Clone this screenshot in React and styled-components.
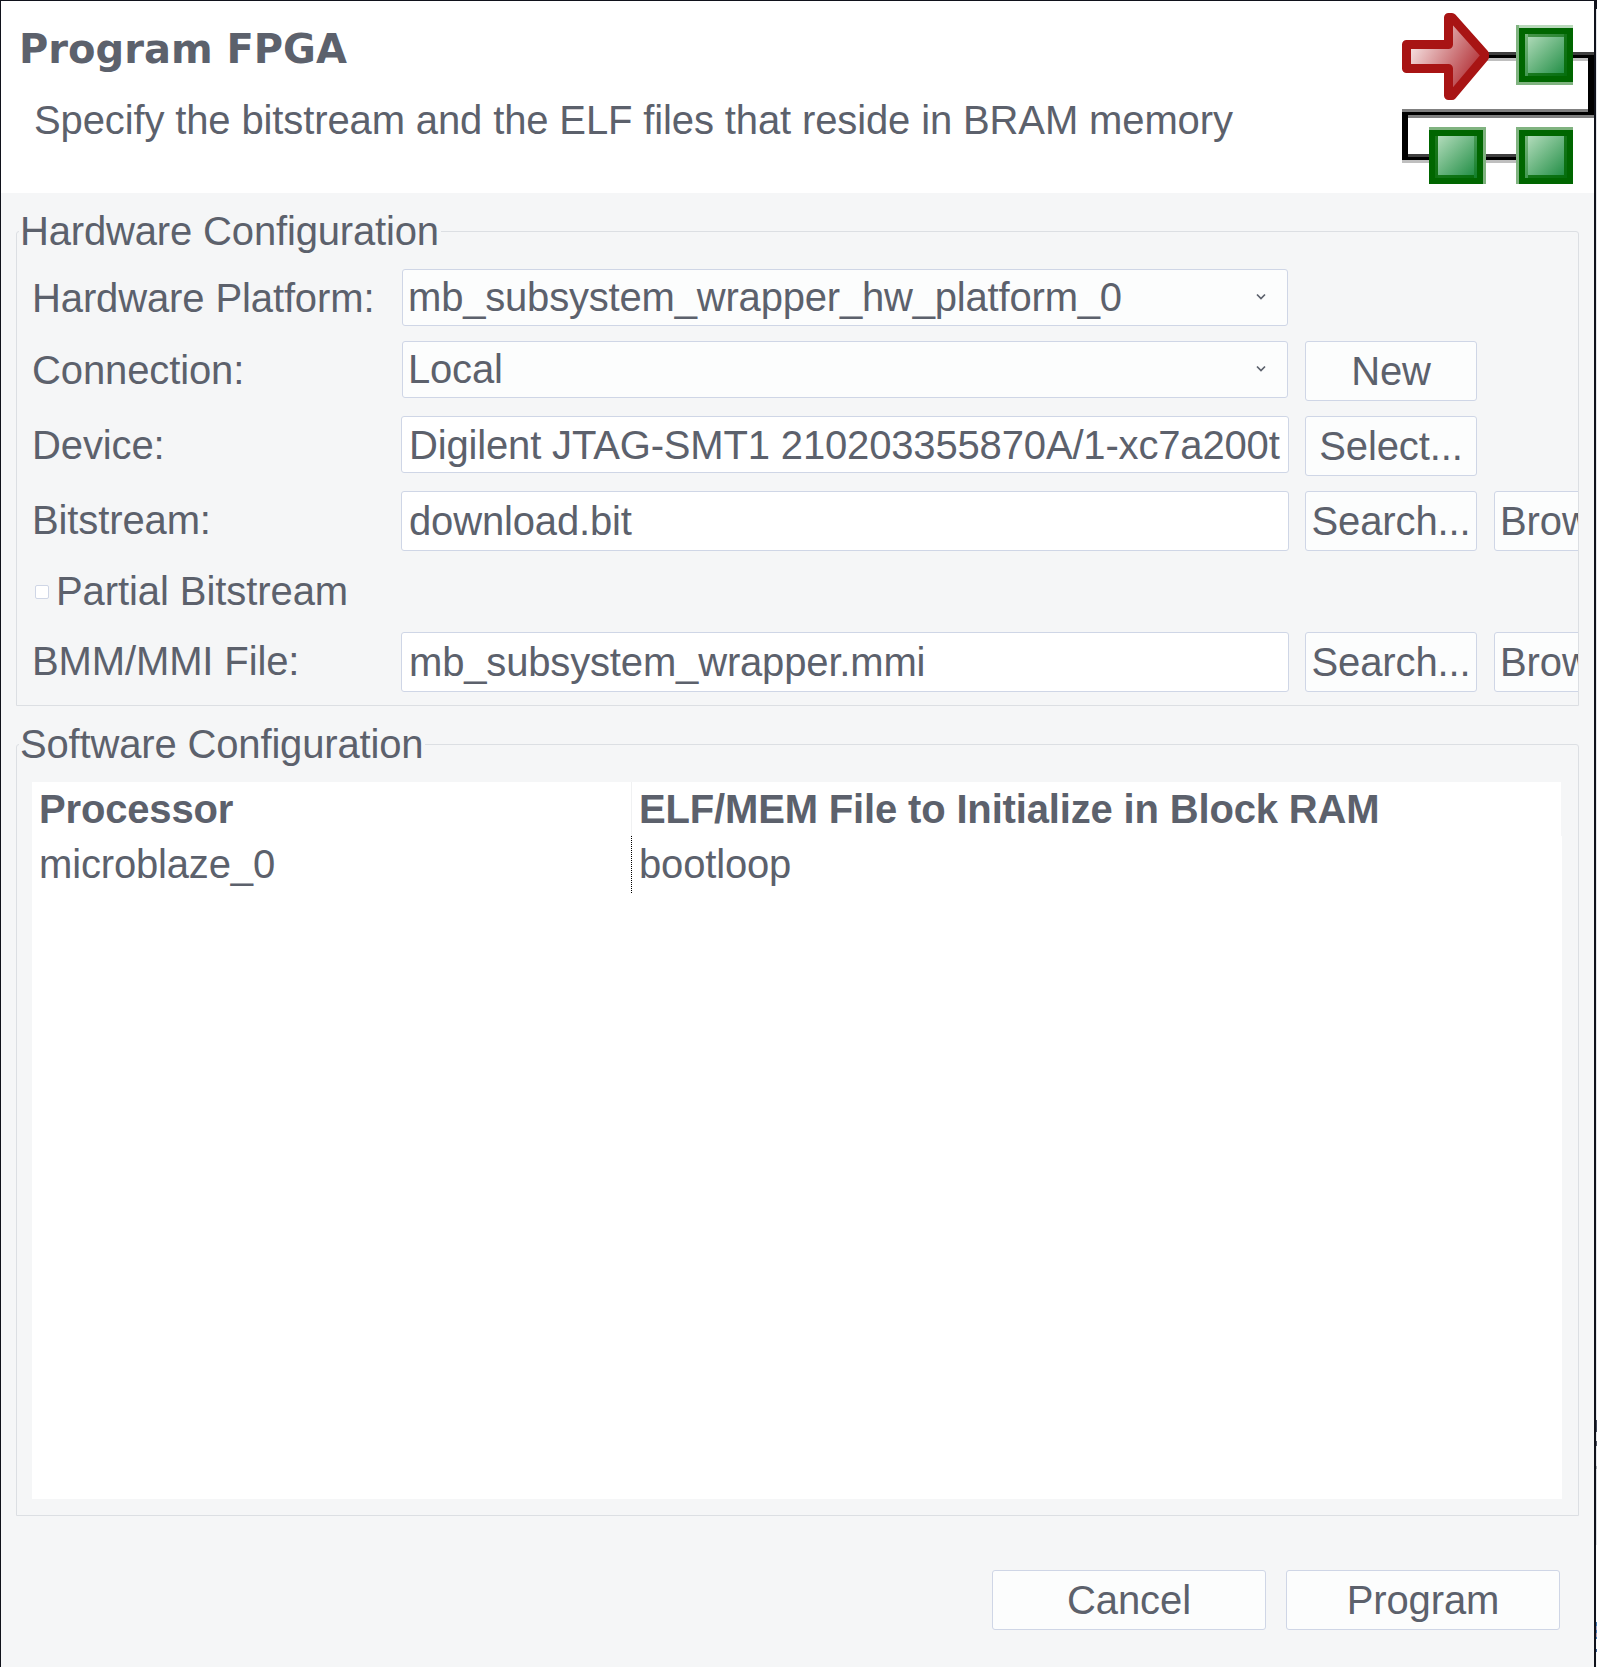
import React from "react";
import styled, { createGlobalStyle } from "styled-components";

const Global = createGlobalStyle`
  * { box-sizing: border-box; }
  html, body { margin: 0; padding: 0; overflow: hidden; background: #12131c; }
`;

const Screen = styled.div`
  display: flex;
  width: 1597px;
  height: 1667px;
  padding: 1px 0 0 1px;
  overflow: hidden;
  background: #10121b;
  font-family: "Liberation Sans", Arial, sans-serif;
  font-size: 40px;
  line-height: 46px;
  letter-spacing: -0.16px;
  color: #5c616c;
  white-space: nowrap;
`;

const Dialog = styled.main`
  display: flex;
  flex-direction: column;
  flex: none;
  width: 1593px;
  height: 1666px;
  background: #f5f6f7;
`;

const Backdrop = styled.div`
  flex: none;
  width: 1px;
  margin: 8px 0 0 2px;
  background: linear-gradient(
    #e4e6ea 0 1411px, #454b5c 1411px 1423px, #e4e6ea 1423px 1432px,
    #4c5262 1432px 1437px, #e4e6ea 1437px 1457px, #a5a7ad 1457px 1460px,
    #dcdfe3 1460px 1536px, #f8f9fa 1536px 1613px, #3f78b4 1613px 1617px,
    #a9a4c4 1617px 1621px, #3f78b4 1621px 1624px, #b59fb4 1624px 1628px,
    #3f78b4 1628px 1630px, #f8f9fa 1630px 1640px, #3b5f92 1640px 1643px,
    #f8f9fa 1643px
  );
`;

const Banner = styled.header`
  display: flex;
  justify-content: space-between;
  height: 192px;
  background: #ffffff;
`;

const BannerText = styled.div`
  padding: 24px 0 0 18px;
`;

const Title = styled.h1`
  margin: 0;
  font: bold 40px/48px "DejaVu Sans", sans-serif;
  letter-spacing: 0;
`;

const Subtitle = styled.p`
  margin: 24px 0 0 15px;
  letter-spacing: -0.127px;
`;

const Chain = styled.svg`
  display: block;
  flex: none;
  width: 192px;
  height: 192px;
`;

const Group = styled.fieldset`
  min-width: 0;
  height: ${(p) => p.$height}px;
  margin: 15px 15px 0 15px;
  padding: 0 0 0 15px;
  border: 1px solid #dcdfe3;
  border-radius: 3px 3px 0 0;
`;

const Legend = styled.legend`
  margin-left: -13px;
  padding: 0 2px 0 1px;
  height: 46px;
`;

const Form = styled.div`
  display: grid;
  grid-template-columns: 369px 904px 189px 172px;
  grid-template-rows: 57px 60px 60px 60px 51px 60px;
  row-gap: 15px;
  width: 1546px;
  margin-top: 15px;
  overflow: hidden;
`;

const Label = styled.label`
  grid-column: 1;
  padding-top: 6px;
  letter-spacing: -0.12px;
`;

const Field = styled.div`
  grid-column: 2;
  width: 888px;
  height: ${(p) => p.$height || 60}px;
  padding: ${(p) => (p.$height ? 5 : 6)}px 7px;
  border: 1px solid #cfd6e6;
  border-radius: 3px;
  background: #ffffff;
`;

const Select = styled.div`
  grid-column: 2;
  display: flex;
  justify-content: space-between;
  width: 886px;
  height: 57px;
  margin-left: 1px;
  padding: 4px 21.5px 0 5px;
  border: 1px solid #cfd6e6;
  border-radius: 3px;
  background: #fcfdfd;
  letter-spacing: -0.19px;
`;

const Chevron = styled.svg`
  width: 10px;
  height: 8px;
  margin-top: 19px;
`;

const Button = styled.button`
  width: ${(p) => p.$width || 172}px;
  height: 60px;
  padding: 0 5px;
  border: 1px solid #cfd6e6;
  border-radius: 3px;
  background: #fcfdfd;
  font: inherit;
  letter-spacing: -0.1px;
  color: inherit;
  text-align: center;
`;

const CheckRow = styled.div`
  grid-column: 1 / 3;
  display: flex;
  padding-top: 2px;
  letter-spacing: -0.08px;
`;

const Checkbox = styled.span`
  width: 14px;
  height: 14px;
  margin: 17px 7px 0 3px;
  border: 1px solid #cfd6e6;
  border-radius: 2px;
  background: #ffffff;
`;

const Table = styled.div`
  width: 1530px;
  height: 717px;
  margin-top: 15px;
  background: #ffffff;
`;

const TableRow = styled.div`
  display: grid;
  grid-template-columns: 600px 1fr;
  height: ${(p) => p.$height}px;
  font-weight: ${(p) => (p.$head ? "bold" : "normal")};
  border-right: ${(p) => (p.$head ? "1px solid #f5f6f7" : "none")};
`;

const Cell = styled.div`
  padding: ${(p) => p.$pad}px 7px 0;
`;

const HeadCell = styled(Cell)`
  &:first-child { border-right: 1px solid #f0f1f2; }
`;

const FocusCell = styled(Cell)`
  background: repeating-linear-gradient(#000 0 1px, #fff 1px 2px) right top / 1px 100% no-repeat;
`;

const Actions = styled.footer`
  display: flex;
  justify-content: flex-end;
  gap: 20px;
  padding: 54px 34px 0 0;
`;

const nodes = [
  { x: 117, y: 27, halo: [114, 24, 57, 60], top: "#b9d9bb", shade: [0.35, 0.6, 0.8, 0.75] },
  { x: 27, y: 129, halo: [27, 126, 57, 57], top: "#80b380", shade: [0.85, 0, 0.35, 0.8] },
  { x: 117, y: 129, halo: [114, 126, 57, 57], top: "#80b380", shade: [0.35, 0, 0.8, 0.8] },
];

function FpgaChain() {
  return (
    <Chain viewBox="0 0 192 192">
      <defs>
        <linearGradient id="green" x1="0" y1="0" x2="1" y2="1">
          <stop offset="0" stopColor="#b8dfc0" />
          <stop offset="1" stopColor="#1a8a3f" />
        </linearGradient>
        <linearGradient id="red" gradientUnits="userSpaceOnUse" x1="6" y1="44" x2="76" y2="84">
          <stop offset="0" stopColor="#f8e8e8" />
          <stop offset="1" stopColor="#ac2026" />
        </linearGradient>
      </defs>
      <g shapeRendering="crispEdges">
        <path fill="#404040" d="M84 51h108v3H84zM6 153h114v3H6z" />
        <path fill="#bfbfbf" d="M84 57h105v3H84zM0 159h120v3H0z" />
        <path fill="#000" d="M84 54h108v3H84zM6 156h114v3H6z" />
        <path fill="#808080" d="M0 108h192v9H0z" />
        <path fill="#000" d="M0 111h192v3H0zM186 54h6v60h-6zM0 111h6v48H0z" />
      </g>
      <path
        d="M4.500 43.500H46.500V16.500H50L82.500 53V56L50 94.500H46.500V67.500H4.500Z"
        fill="url(#red)"
        stroke="#a81414"
        strokeWidth="9"
        strokeLinejoin="round"
      />
      {nodes.map((n, i) => (
        <g key={i} shapeRendering="crispEdges">
          <rect x={n.halo[0]} y={n.halo[1]} width={n.halo[2]} height={n.halo[3]} fill="#80b380" />
          <rect x={n.x} y={n.y - 3} width="54" height="3" fill={n.top} />
          <rect x={n.x} y={n.y} width="54" height="54" fill="#006600" />
          <rect x={n.x + 6} y={n.y + 6} width="42" height="42" fill="url(#green)" />
          <g fill="#006600">
            <rect x={n.x + 6} y={n.y + 6} width="3" height="42" opacity={n.shade[0]} />
            <rect x={n.x + 9} y={n.y + 6} width="36" height="3" opacity={n.shade[1]} />
            <rect x={n.x + 45} y={n.y + 6} width="3" height="42" opacity={n.shade[2]} />
            <rect x={n.x + 9} y={n.y + 45} width="36" height="3" opacity={n.shade[3]} />
          </g>
        </g>
      ))}
    </Chain>
  );
}

function Arrow() {
  return (
    <Chevron viewBox="0 0 10 8">
      <path d="M1 1.500L5 5.500L9 1.500" fill="none" stroke="#5c616c" strokeWidth="1.700" />
    </Chevron>
  );
}

export default function App() {
  return (
    <>
      <Global />
      <Screen>
        <Dialog>
          <Banner>
            <BannerText>
              <Title>Program FPGA</Title>
              <Subtitle>Specify the bitstream and the ELF files that reside in BRAM memory</Subtitle>
            </BannerText>
            <FpgaChain />
          </Banner>
          <Group $height={498}>
            <Legend>Hardware Configuration</Legend>
            <Form>
              <Label>Hardware Platform:</Label>
              <Select>mb_subsystem_wrapper_hw_platform_0<Arrow /></Select>
              <Label>Connection:</Label>
              <Select>Local<Arrow /></Select>
              <Button>New</Button>
              <Label>Device:</Label>
              <Field $height={57}>Digilent JTAG-SMT1 210203355870A/1-xc7a200t</Field>
              <Button>Select...</Button>
              <Label>Bitstream:</Label>
              <Field>download.bit</Field>
              <Button>Search...</Button>
              <Button>Browse...</Button>
              <CheckRow><Checkbox />Partial Bitstream</CheckRow>
              <Label>BMM/MMI File:</Label>
              <Field>mb_subsystem_wrapper.mmi</Field>
              <Button>Search...</Button>
              <Button>Browse...</Button>
            </Form>
          </Group>
          <Group $height={795}>
            <Legend>Software Configuration</Legend>
            <Table>
              <TableRow $head $height={54}>
                <HeadCell $pad={4}>Processor</HeadCell>
                <HeadCell $pad={4}>ELF/MEM File to Initialize in Block RAM</HeadCell>
              </TableRow>
              <TableRow $height={57}>
                <FocusCell $pad={5}>microblaze_0</FocusCell>
                <Cell $pad={5}>bootloop</Cell>
              </TableRow>
            </Table>
          </Group>
          <Actions>
            <Button $width={274}>Cancel</Button>
            <Button $width={274}>Program</Button>
          </Actions>
        </Dialog>
        <Backdrop />
      </Screen>
    </>
  );
}
